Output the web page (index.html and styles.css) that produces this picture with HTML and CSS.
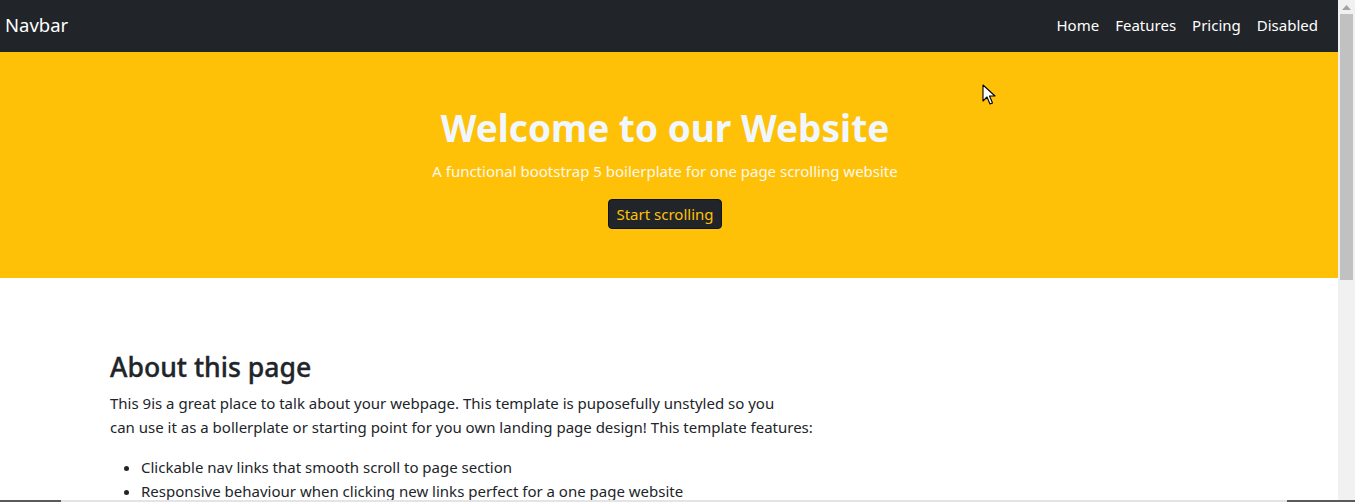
FILE: index.html
```html
<!DOCTYPE html>
<html lang="en">
<head>
<meta charset="utf-8">
<title>Navbar</title>
<link rel="stylesheet" href="styles.css">
</head>
<body>
<div class="page">
  <nav class="navbar">
    <a class="brand" href="#">Navbar</a>
    <ul class="nav">
      <li><a href="#">Home</a></li>
      <li><a href="#">Features</a></li>
      <li><a href="#">Pricing</a></li>
      <li><a href="#">Disabled</a></li>
    </ul>
  </nav>
  <header class="hero">
    <h1 class="hero-title">Welcome to our Website</h1>
    <p class="hero-lead">A functional bootstrap 5 boilerplate for one page scrolling website</p>
    <a class="btn" href="#">Start scrolling</a>
  </header>
  <section class="about">
    <div class="container">
      <h2 class="about-title">About this page</h2>
      <p class="about-text">This 9is a great place to talk about your webpage. This template is puposefully unstyled so you<br>can use it as a bollerplate or starting point for you own landing page design! This template features:</p>
      <ul class="features">
        <li>Clickable nav links that smooth scroll to page section</li>
        <li>Responsive behaviour when clicking new links perfect for a one page website</li>
      </ul>
    </div>
  </section>
</div>
<aside class="scrollbar">
  <div class="sb-up"><svg width="9" height="5" viewBox="0 0 9 5"><path d="M4.5 0L9 5H0z" fill="#a3a3a3"/></svg></div>
  <div class="sb-thumb"></div>
</aside>
<div class="cursor"><svg width="14" height="21" viewBox="0 0 14 21"><path d="M1 1v16l4-4 3 7 2.5-1-3-7h5.5z" fill="#fff" stroke="#000" stroke-width="1.1" stroke-linejoin="round"/></svg></div>
<div class="bottom-line"><span class="seg seg-left"></span><span class="seg seg-right"></span></div>
</body>
</html>
```
FILE: styles.css
```css
html, body {
  margin: 0;
  height: 100%;
  overflow: hidden;
}
body {
  display: flex;
  font-family: "Noto Sans", "Open Sans", sans-serif;
  font-size: 15px;
  line-height: 24px;
  color: #212529;
  background: #fff;
}
.page {
  flex: 1;
  min-width: 0;
}
a { text-decoration: none; }

.navbar {
  height: 52px;
  background: #212529;
  display: flex;
  align-items: center;
  justify-content: space-between;
  padding: 0 12px 0 5px;
}
.brand {
  color: #fff;
  font-size: 18.5px;
  line-height: 30px;
  margin-top: -2px;
}
.nav {
  list-style: none;
  margin: -2px 0 0;
  padding: 0;
  display: flex;
}
.nav a {
  display: block;
  color: #fff;
  padding: 8px;
  line-height: 24px;
}

.hero {
  background: #ffc107;
  height: 226px;
  box-sizing: border-box;
  padding: 54px 8px 0 0;
  text-align: center;
}
.hero-title {
  margin: 0 0 9px;
  font-size: 37px;
  font-weight: 700;
  line-height: 44px;
  color: #f0f7ff;
}
.hero-lead {
  margin: 0 0 16px;
  color: #fdf8ee;
  line-height: 24px;
}
.btn {
  display: inline-block;
  background: #212529;
  color: #ffc107;
  border: 1px solid #111416;
  border-radius: 4px;
  padding: 2px 7px;
  line-height: 24px;
}

.about {
  padding-top: 70px;
}
.container {
  max-width: 1140px;
  margin: 0 auto;
  padding: 0 12px 0 11px;
  box-sizing: border-box;
}
.about-title {
  margin: 0 0 5px;
  font-size: 26.6px;
  font-weight: 500;
  line-height: 38px;
  -webkit-text-stroke: 0.35px #212529;
}
.about-text {
  margin: 0 0 16px;
}
.features {
  margin: 0;
  padding-left: 31px;
}

.scrollbar {
  width: 17px;
  flex: none;
  height: 100vh;
  background: #f1f1f1;
  display: flex;
  flex-direction: column;
  align-items: center;
}
.sb-up {
  height: 14px;
  width: 17px;
  display: flex;
  align-items: center;
  justify-content: center;
}
.sb-thumb {
  width: 13px;
  height: 266px;
  background: #c1c1c1;
}

.cursor {
  position: fixed;
  left: 982px;
  top: 84px;
  line-height: 0;
}

.bottom-line {
  position: fixed;
  left: 0;
  right: 0;
  bottom: 0;
  height: 2px;
  background: #e4e4e4;
  display: flex;
  justify-content: space-between;
}
.seg {
  height: 2px;
  background: #5a5a5a;
}
.seg-left { width: 61px; }
.seg-right { width: 68px; }
```
